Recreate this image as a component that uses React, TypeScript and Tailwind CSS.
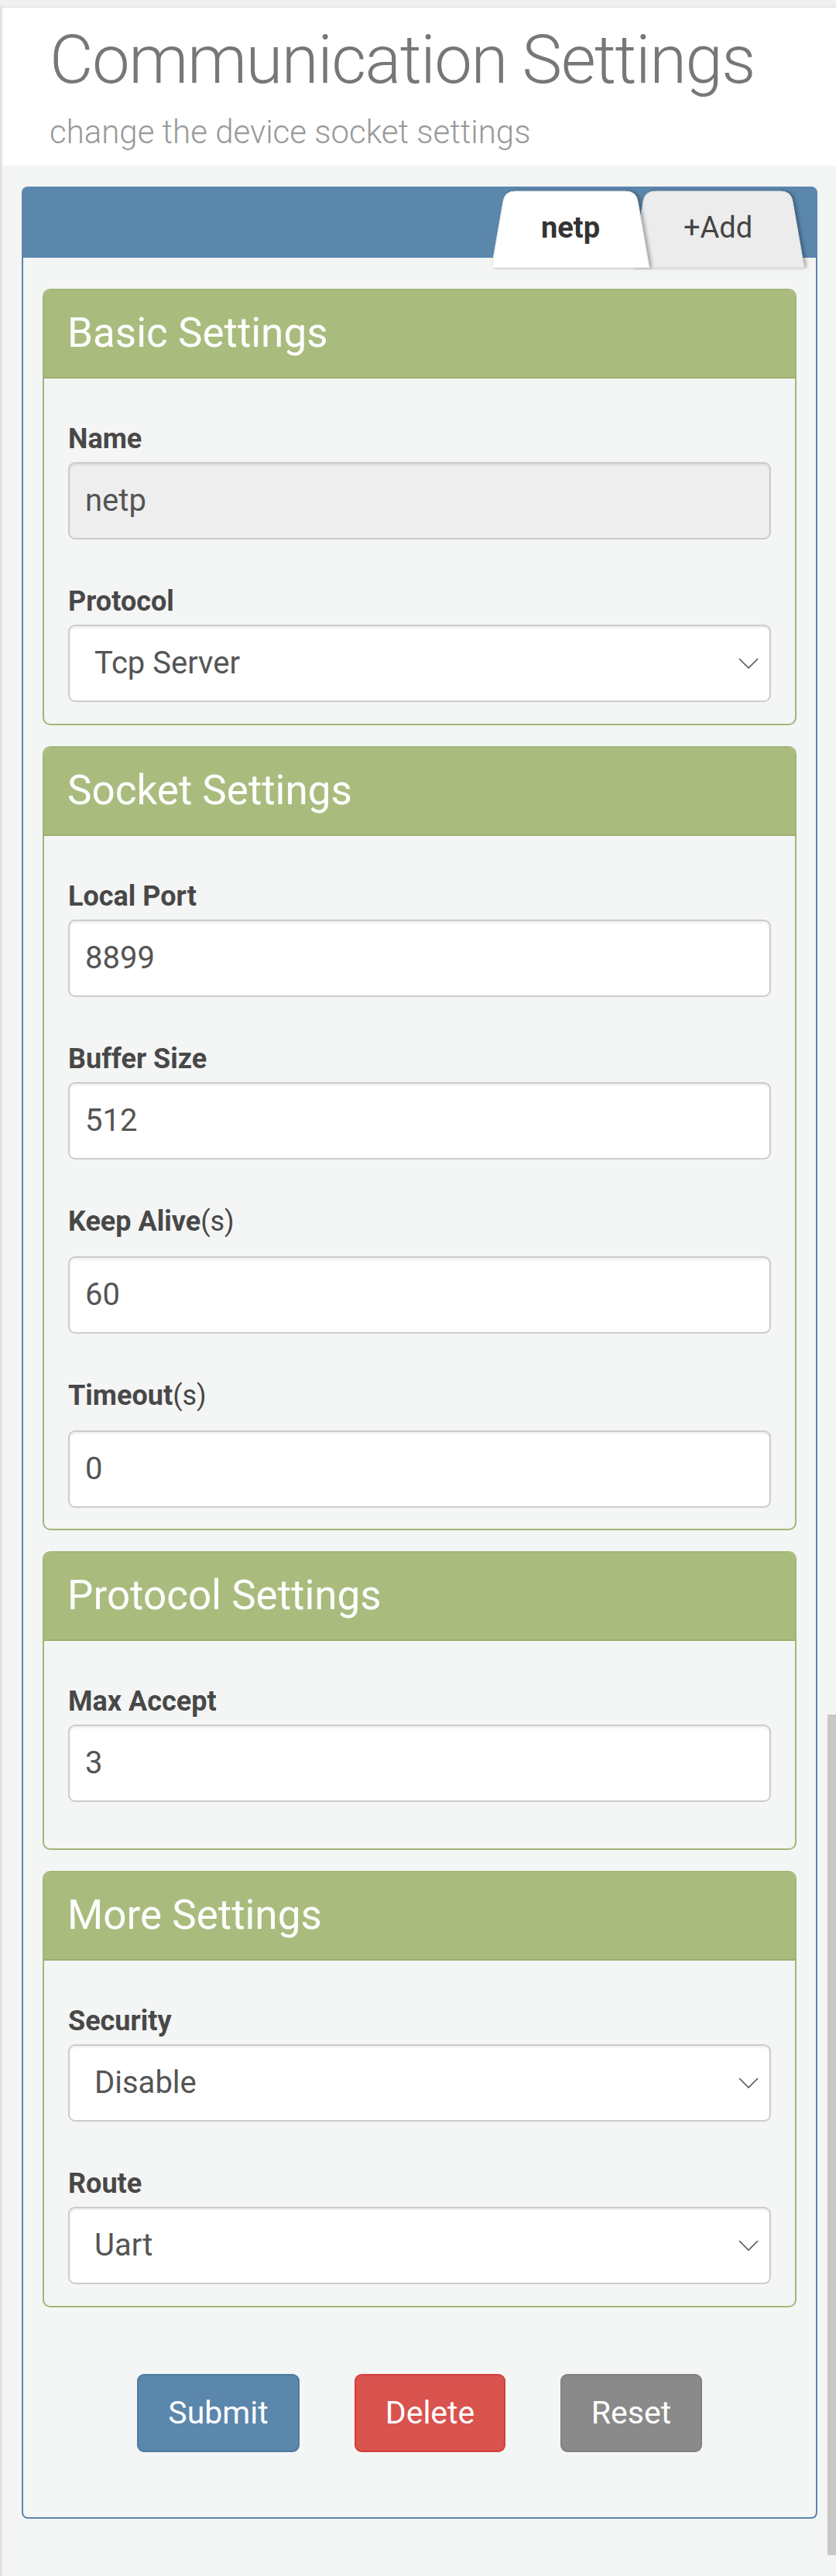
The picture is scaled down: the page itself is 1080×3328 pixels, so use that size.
import React from 'react';

const font = { fontFamily: 'Roboto, "Noto Sans", Arial, sans-serif' };

type FieldProps = {
  label: string;
  suffix?: string;
  value: string;
  select?: boolean;
  disabled?: boolean;
  first?: boolean;
};

const Chevron = () => (
  <svg width="26" height="14" viewBox="0 0 26 14" className="shrink-0">
    <path d="M1 1 L13 13 L25 1" fill="none" stroke="#555" strokeWidth="1.6" />
  </svg>
);

const Field = ({ label, suffix, value, select, disabled, first }: FieldProps) => (
  <div className={first ? '' : 'mt-[60px]'}>
    <div className={`text-[36px] leading-[40px] font-bold text-[#484848] ${suffix ? 'mb-[25px]' : 'mb-[10px]'}`}>
      {label}
      {suffix && <span className="font-normal">{suffix}</span>}
    </div>
    <div
      className={`h-[100px] rounded-[9px] border-2 border-[#cccccc] shadow-[inset_0_2px_3px_rgba(0,0,0,0.08)] flex items-center justify-between text-[40px] text-[#555] ${
        disabled ? 'bg-[#eeeeee] pl-[20px]' : select ? 'bg-white pl-[32px] pr-[14px]' : 'bg-white pl-[20px]'
      }`}
    >
      <span>{value}</span>
      {select && <Chevron />}
    </div>
  </div>
);

const Card = ({ title, children, pb = 'pb-[28px]' }: { title: string; children: React.ReactNode; pb?: string }) => (
  <div className="rounded-[10px] border-2 border-[#a3b677] bg-[#f4f5f5] overflow-hidden">
    <div className="bg-[#a9bc7e] border-b-2 border-[#9db06f] h-[114px] px-[30px] pt-[26px] text-white text-[53px] leading-[58px] font-normal">
      {title}
    </div>
    <div className={`px-[31px] pt-[58px] ${pb}`}>{children}</div>
  </div>
);

// trapezoid tab; i = how far the top edge sits in from the bottom corners
const Tab = ({ label, active, width, className = '' }: { label: string; active?: boolean; width: number; className?: string }) => {
  const i = 19;
  return (
    <div className={`relative h-[100px] ${className}`} style={{ width }}>
      <svg
        className="absolute inset-0 [filter:drop-shadow(3px_0_2px_rgba(0,0,0,0.3))]"
        width={width}
        height={100}
        viewBox={`0 0 ${width} 100`}
      >
        <path
          d={`M0 100 L${i - 4} 14 Q${i - 2} 1 ${i + 12} 1 L ${width - i - 12} 1 Q ${width - i + 2} 1 ${width - i + 4} 14 L ${width} 100 Z`}
          fill={active ? '#ffffff' : '#ececec'}
          stroke={active ? '#e2e2e2' : '#dcdcdc'}
          strokeWidth="1"
        />
      </svg>
      <div
        className={`relative text-center pt-[26px] text-[38px] leading-[44px] ${
          active ? 'font-bold text-[#333]' : 'text-[#444]'
        }`}
      >
        {label}
      </div>
    </div>
  );
};

const Button = ({ label, cls, w }: { label: string; cls: string; w: string }) => (
  <button className={`${w} h-[101px] rounded-[9px] border-2 text-white text-[41px] ${cls}`}>{label}</button>
);

const App: React.FC = () => {
  return (
    <div className="relative min-h-[3328px] bg-[#f3f4f4]" style={font}>
      <div className="h-[8px] bg-[#f0f0f0]" />
      <div className="border-l-[3px] border-[#e2e2e2] min-h-[3320px]">
        <div className="bg-white border-t-2 border-[#e8e8e8] h-[206px] pl-[61px] pt-[23px]">
          <h1 className="text-[87px] leading-[88px] font-light text-[#777] tracking-[-1.5px]">Communication Settings</h1>
          <p className="mt-[26px] text-[42px] leading-[48px] font-light text-[#999]">change the device socket settings</p>
        </div>

        <div className="ml-[25px] mr-[24px] mt-[27px]">
          <div className="bg-[#5b87ad] rounded-t-[8px] h-[92px] flex justify-end items-start pt-[5px] pr-[17px]">
            <div className="relative flex">
              <Tab label="netp" active width={204} className="z-20" />
              <Tab label="+Add" width={223} className="z-10 -ml-[23px]" />
            </div>
          </div>
          <div className="relative bg-[#f4f5f5] border-2 border-t-0 border-[#5b87ad] rounded-b-[8px] px-[25px] pt-[40px] pb-[84px]">
            <div className="flex flex-col gap-[27px]">
              <Card title="Basic Settings">
                <Field label="Name" value="netp" disabled first />
                <Field label="Protocol" value="Tcp Server" select />
              </Card>
              <Card title="Socket Settings" pb="pb-[27px]">
                <Field label="Local Port" value="8899" first />
                <Field label="Buffer Size" value="512" />
                <Field label="Keep Alive" suffix="(s)" value="60" />
                <Field label="Timeout" suffix="(s)" value="0" />
              </Card>
              <Card title="Protocol Settings" pb="pb-[60px]">
                <Field label="Max Accept" value="3" first />
              </Card>
              <Card title="More Settings">
                <Field label="Security" value="Disable" select first />
                <Field label="Route" value="Uart" select />
              </Card>
            </div>

            <div className="mt-[86px] flex justify-center gap-[71px]">
              <Button label="Submit" w="w-[210px]" cls="bg-[#5b87ad] border-[#4f7aa0]" />
              <Button label="Delete" w="w-[195px]" cls="bg-[#d9534f] border-[#d43f3a]" />
              <Button label="Reset" w="w-[183px]" cls="bg-[#8a8a8a] border-[#808080]" />
            </div>
          </div>
        </div>
      </div>

      {/* scrollbar thumb */}
      <div className="absolute right-0 top-[2215px] w-[11px] h-[1086px] bg-[#c6c7c6]" />
    </div>
  );
};

export default App;
